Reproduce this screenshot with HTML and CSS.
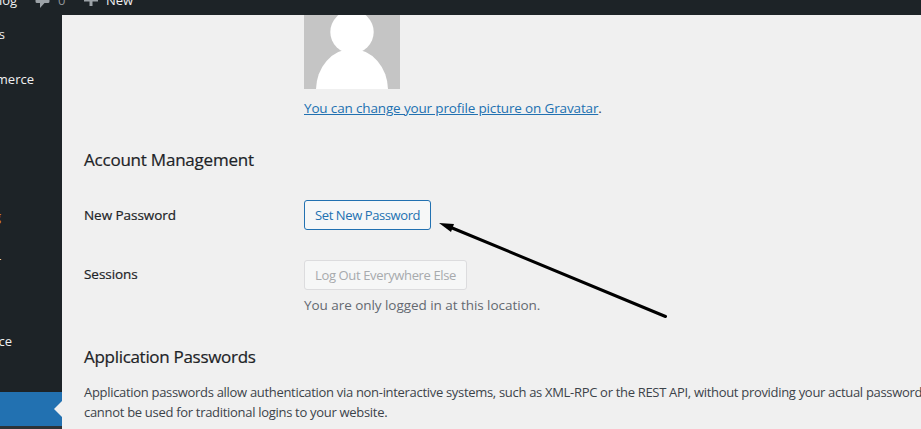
FILE: index.html
```
<!DOCTYPE html>
<html lang="en">

<head>
    <meta charset="UTF-8">
    <meta name="viewport" content="width=device-width, initial-scale=1.0">
    <title>Profile</title>
    <link rel="stylesheet" href="styles.css">
</head>

<body>
    <header class="adminbar">
        <span class="site-name">log</span>
        <svg class="icon-comment" width="15" height="15" viewBox="0 0 15 15">
            <path d="M2 0h11q1.500 0 1.500 1.500v7q0 1.500-1.500 1.500H9.500L5 15V10H2Q.5 10 .5 8.500v-7Q.5 0 2 0z" />
        </svg>
        <span class="count">0</span>
        <svg class="icon-plus" width="14" height="14" viewBox="0 0 14 14">
            <path d="M5.500 0h3v6.500H14v3H8.500V14h-3V9.500H0v-3h5.500z" />
        </svg>
        <span class="new">New</span>
    </header>
    <div class="wrap">
        <nav class="menu">
            <a class="item item-posts">s</a>
            <a class="item item-shop">merce</a>
            <a class="item item-update">g</a>
            <a class="item item-cut">r</a>
            <a class="item item-look">ce</a>
            <div class="current"></div>
            <div class="submenu"></div>
        </nav>
        <main class="content">
            <div class="row picture">
                <div class="label"></div>
                <div class="field">
                    <svg class="avatar" width="96" height="74" viewBox="0 22 96 74">
                        <rect y="0" width="96" height="96" fill="#c5c5c5" />
                        <circle cx="48" cy="39" r="21.700" fill="#fff" />
                        <ellipse cx="48" cy="97" rx="36" ry="41" fill="#fff" />
                    </svg>
                    <p class="gravatar"><a href="#">You can change your profile picture on Gravatar</a>.</p>
                </div>
            </div>
            <h2 class="title account">Account Management</h2>
            <div class="row password">
                <div class="label label-password">New Password</div>
                <button class="button button-set">Set New Password</button>
            </div>
            <div class="row sessions">
                <div class="label label-sessions">Sessions</div>
                <div class="field">
                    <button class="button button-logout" disabled>Log Out Everywhere Else</button>
                    <p class="hint">You are only logged in at this location.</p>
                </div>
            </div>
            <h2 class="title application">Application Passwords</h2>
            <p class="text"><span class="line-one">Application passwords allow authentication via non-interactive systems, such as XML-RPC or the REST API, without providing your actual password</span><br><span class="line-two">cannot be used for traditional logins to your website.</span></p>
        </main>
    </div>
    <!-- arrow over the page, points to the button -->
    <svg class="arrow" width="232" height="100" viewBox="0 0 232 100">
        <path d="M12 7.500L226.500 96.500" stroke="#000" stroke-width="3" stroke-linecap="round" />
        <path d="M0 3L15 4L12 12z" />
    </svg>
</body>

</html>
```
FILE: styles.css
```
body {
    margin: 0;
    height: 429px;
    overflow: hidden;
    background: #f0f0f0;
    font-family: "Open Sans", "Noto Sans", sans-serif;
    font-size: 13px;
    color: #3c434a;
}

h2,
p {
    margin: 0;
}

.adminbar {
    display: flex;
    height: 15px;
    overflow: hidden;
    background: #1d2327;
    color: #f0f0f1;
    line-height: 18px;
}

.adminbar span {
    flex: none;
    margin-top: -9px;
    white-space: nowrap;
}

.adminbar svg {
    flex: none;
    fill: #9ca2a7;
}

.site-name {
    width: 35px;
    text-indent: -1px;
}

.icon-comment {
    margin-top: -7px;
}

.adminbar .count {
    width: 26px;
    padding-left: 8px;
    color: #8c9196;
}

.icon-plus {
    margin-top: -8px;
}

.new {
    padding-left: 8px;
}

.wrap {
    display: flex;
    height: 414px;
}

.menu {
    flex: none;
    width: 62px;
    overflow: hidden;
    background: #1d2327;
}

.item {
    display: flex;
    justify-content: flex-end;
    height: 18px;
    line-height: 18px;
    color: #f0f0f1;
}

.item-posts {
    padding: 10px 57px 0 0;
}

.item-shop {
    padding: 27px 28px 0 0;
}

.item-update {
    padding: 119px 61px 0 0;
    color: #d98e23;
}

.item-cut {
    padding: 27px 61px 0 0;
}

.item-look {
    padding: 62px 50px 0 0;
}

.current {
    display: flex;
    justify-content: flex-end;
    align-items: center;
    height: 34px;
    margin-top: 42px;
    background: #2271b1;
}

.current::after {
    content: "";
    border: 8px solid transparent;
    border-left: 0;
    border-right-color: #f0f0f0;
}

.submenu {
    height: 3px;
    background: #2c3338;
}

.content {
    flex: 1;
    min-width: 0;
    padding-left: 22px;
    overflow: hidden;
}

.row {
    display: flex;
    align-items: flex-start;
}

.label {
    flex: none;
    width: 220px;
    color: #1d2327;
    font-size: 13.5px;
    letter-spacing: -0.05px;
    line-height: 18px;
    -webkit-text-stroke: 0.2px #1d2327;
}

.picture {
    height: 133px;
}

.avatar {
    display: block;
}

.gravatar {
    margin-top: 9px;
    font-size: 13.5px;
    letter-spacing: -0.15px;
    line-height: 20px;
    white-space: nowrap;
}

.gravatar a {
    color: #2271b1;
}

.title {
    color: #1d2327;
    font-size: 17px;
    font-weight: 400;
    letter-spacing: -0.22px;
    line-height: 24px;
    white-space: nowrap;
    -webkit-text-stroke: 0.2px #1d2327;
}

.application {
    letter-spacing: -0.3px;
}

.password {
    height: 60px;
    margin-top: 28px;
}

.label-password {
    padding-top: 6px;
}

.label-sessions {
    padding-top: 5px;
}

.button {
    display: block;
    box-sizing: border-box;
    height: 30px;
    padding: 0 0 0 10px;
    border: 1px solid #2271b1;
    border-radius: 3px;
    background: #f6f7f7;
    color: #2271b1;
    font-family: inherit;
    font-size: 13px;
    letter-spacing: -0.4px;
    line-height: 28px;
    text-align: left;
    white-space: nowrap;
}

.button-set {
    width: 127px;
}

.button-logout {
    width: 163px;
    border-color: #dcdcde;
    color: #a7aaad;
    letter-spacing: -0.36px;
}

.sessions {
    height: 85px;
}

.hint {
    margin-top: 5px;
    color: #646970;
    font-size: 13.5px;
    letter-spacing: -0.05px;
    line-height: 20px;
    white-space: nowrap;
}

.text {
    margin-top: 14px;
    letter-spacing: -0.31px;
    line-height: 19.5px;
    white-space: nowrap;
}

.line-two {
    letter-spacing: -0.3px;
}

.arrow {
    position: absolute;
    left: 439px;
    top: 220px;
}
```
